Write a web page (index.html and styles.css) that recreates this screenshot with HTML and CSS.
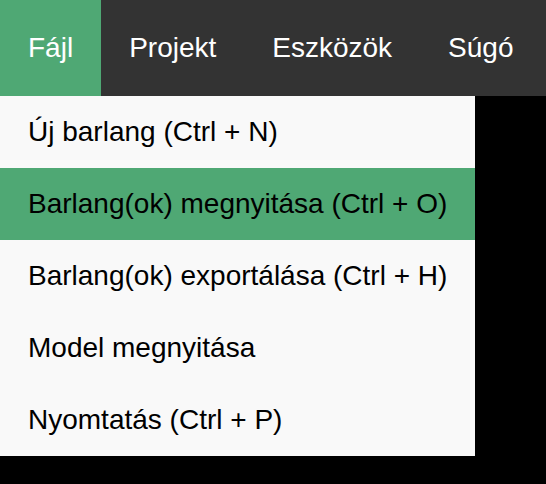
FILE: index.html
```html
<!DOCTYPE html>
<html lang="hu">
<head>
<meta charset="utf-8">
<title>Menü</title>
<link rel="stylesheet" href="styles.css">
</head>
<body>
<nav class="menubar">
  <div class="menu-item active">Fájl</div>
  <div class="menu-item">Projekt</div>
  <div class="menu-item">Eszközök</div>
  <div class="menu-item">Súgó</div>
</nav>
<ul class="dropdown">
  <li class="entry">Új barlang (Ctrl + N)</li>
  <li class="entry selected">Barlang(ok) megnyitása (Ctrl + O)</li>
  <li class="entry">Barlang(ok) exportálása (Ctrl + H)</li>
  <li class="entry">Model megnyitása</li>
  <li class="entry">Nyomtatás (Ctrl + P)</li>
</ul>
</body>
</html>
```
FILE: styles.css
```css
html, body {
  margin: 0;
  padding: 0;
  background: #000;
  font-family: "Liberation Sans", Arial, Helvetica, sans-serif;
  font-size: 28px;
}
.menubar {
  display: flex;
  height: 96px;
  background: #333333;
}
.menu-item {
  display: flex;
  align-items: center;
  padding: 0 28px;
  color: #fff;
}
.menu-item.active {
  background: #4fa874;
}
.dropdown {
  list-style: none;
  margin: 0;
  padding: 0;
  width: 475px;
  background: #f9f9f9;
}
.entry {
  height: 72px;
  display: flex;
  align-items: center;
  padding-left: 28px;
  color: #000;
}
.entry.selected {
  background: #4fa874;
}
```
